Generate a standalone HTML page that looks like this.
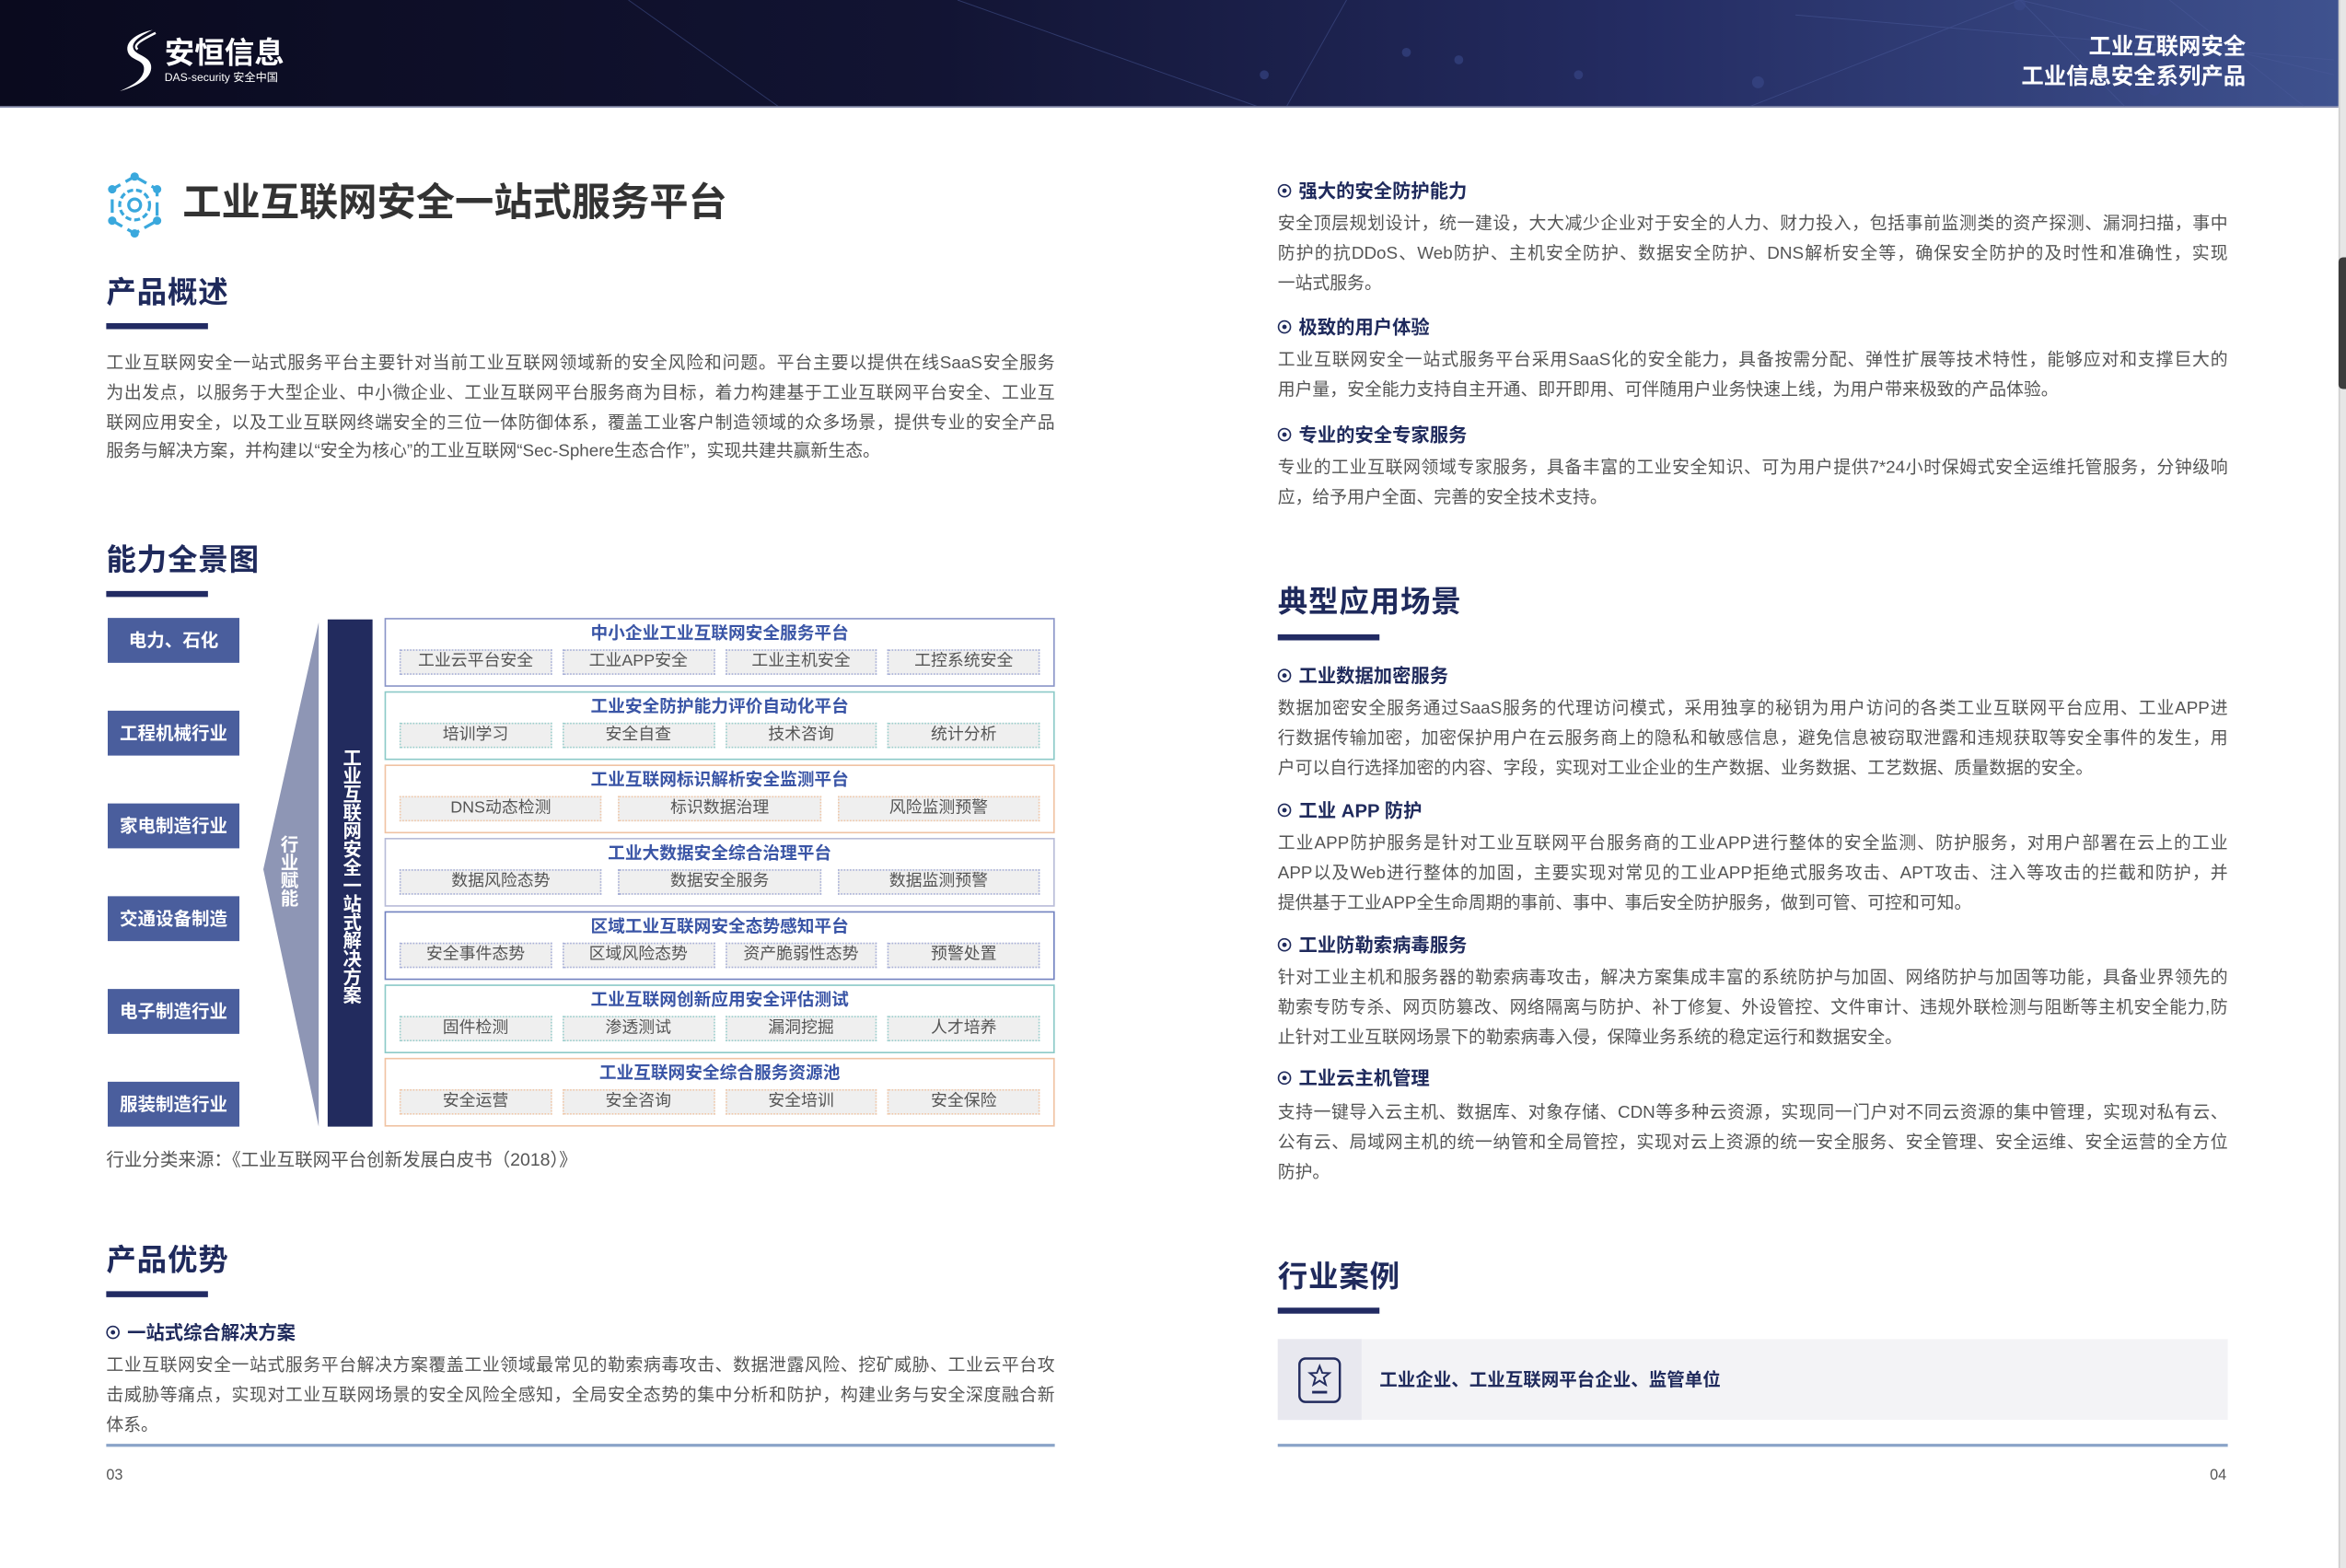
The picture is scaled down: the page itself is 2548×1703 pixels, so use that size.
<!DOCTYPE html>
<html><head><meta charset="utf-8">
<style>
html,body{margin:0;padding:0;width:2548px;height:1702px;overflow:hidden;background:#fff}
#w{position:absolute;left:0;top:0;width:1568px;height:1047.5px;transform:scale(1.625);transform-origin:0 0;font-family:"Liberation Sans","Noto Sans CJK SC",sans-serif;}
.a{position:absolute}
.hdr{left:0;top:0;width:1563px;height:71px;background:linear-gradient(90deg,#0a0a1e 0%,#121433 40%,#242c62 70%,#3f528f 100%);overflow:hidden;border-bottom:1px solid #8a90b0}
.h2{font-size:20px;font-weight:bold;color:#1f2a5c;letter-spacing:0.5px}
.bar{height:4px;background:#222b63}
.p{font-size:11.6px;line-height:19.8px;color:#555;text-align:justify;text-align-last:justify}
.p div{height:19.8px;overflow:visible}
.p div:last-child{text-align-last:left}
.sub{font-size:12.5px;font-weight:bold;color:#1f2a5c;line-height:16px;white-space:nowrap}
.sub i{display:inline-block;width:7px;height:7px;border:1.3px solid #1f2a5c;border-radius:50%;position:relative;margin-right:5px;vertical-align:0px}
.sub i:after{content:"";position:absolute;left:2px;top:2px;width:3px;height:3px;background:#1f2a5c;border-radius:50%}
.ind{left:72px;width:88px;height:30px;background:#4a5e9d;color:#fff;font-weight:bold;font-size:12px;line-height:30px;text-align:center}
.box{left:257px;width:446px;height:44px;border:1px solid #8a95c8;background:#fff}
.box .t{text-align:center;font-size:11.5px;font-weight:bold;color:#3a55a6;line-height:14px;margin-top:3px}
.chips{display:flex;gap:7px;padding:3px 9px 0 9px}
.chips span{flex:1;height:15px;line-height:15px;background:#efefef;border:1px dotted #a8b0d8;font-size:11px;color:#555;text-align:center}
.teal{border-color:#8ccac8}.teal .chips span{border-color:#9ccfcd}
.org{border-color:#f0c3a3}.org .chips span{border-color:#f0c8aa}
.lav{border-color:#b8bcd8}
.vt{writing-mode:vertical-rl;font-weight:bold;color:#fff}
.line{height:2px;background:#8aa3c8}
</style></head><body><div id="w">

<div class="a hdr">
<svg class="a" style="left:0;top:0" width="1563" height="71">
<g stroke="#4a5a9a" stroke-width="0.6" opacity="0.5" fill="none">
<line x1="420" y1="0" x2="520" y2="71"/><line x1="640" y1="0" x2="840" y2="71"/>
<line x1="900" y1="0" x2="860" y2="71"/><line x1="1350" y1="0" x2="1170" y2="71"/>
<line x1="1350" y1="0" x2="1560" y2="50"/><line x1="1350" y1="0" x2="1420" y2="71"/>
<line x1="1200" y1="10" x2="1560" y2="40"/><line x1="1450" y1="0" x2="1540" y2="71"/>
</g>
<g fill="#3a4a8a" opacity="0.6">
<circle cx="1350" cy="3" r="4"/><circle cx="1175" cy="55" r="4"/><circle cx="1055" cy="50" r="3"/>
<circle cx="975" cy="40" r="3"/><circle cx="845" cy="50" r="3"/><circle cx="940" cy="35" r="3"/><circle cx="1440" cy="60" r="4"/>
</g>
</svg>
<svg class="a" style="left:78px;top:18px" width="30" height="44" viewBox="0 0 30 44">
<path d="M24 2 C14 4 4 10 8 18 C11 23 20 22 18 30 C16 37 8 40 2 43 C12 40 24 35 23 26 C22 19 12 19 11 14 C10 9 18 5 24 2Z" fill="#fff"/>
<path d="M26 4 C18 8 10 12 14 15" stroke="#fff" stroke-width="1.5" fill="none"/>
</svg>
<div class="a" style="left:110px;top:25px;color:#fff;font-size:20px;font-weight:bold;line-height:22px">安恒信息</div>
<div class="a" style="left:110px;top:47px;color:#fff;font-size:7.5px;line-height:9px;white-space:nowrap">DAS-security 安全中国</div>
<div class="a" style="right:62px;top:22px;color:#fff;font-size:15px;font-weight:bold;line-height:20px;text-align:right;white-space:nowrap">工业互联网安全<br>工业信息安全系列产品</div>
</div>
<div class="a" style="left:1563px;top:0;width:5px;height:1048px;background:#e6e6e6;border-left:1px solid #cfcfcf"></div>
<div class="a" style="left:1563px;top:172px;width:5px;height:88px;background:#3c3c3c;border-radius:3px 0 0 3px"></div>

<!-- LEFT -->
<svg class="a" style="left:69px;top:114px" width="42" height="46" viewBox="0 0 42 46">
<g stroke="#3aa8dd" stroke-width="2" fill="none">
<path d="M21 4 L36 12.5 L36 33.5 L21 42 L6 33.5 L6 12.5Z" stroke-dasharray="9 4"/>
<circle cx="21" cy="23" r="10" stroke-dasharray="4 2"/>
<circle cx="21" cy="23" r="4"/>
</g>
<g fill="#3aa8dd"><circle cx="21" cy="4" r="2.8"/><circle cx="36" cy="12.5" r="2.8"/><circle cx="36" cy="33.5" r="2.8"/><circle cx="21" cy="42" r="2.8"/><circle cx="6" cy="33.5" r="2.8"/><circle cx="6" cy="12.5" r="2.8"/></g>
</svg>
<div class="a" style="left:122px;top:119px;font-size:26px;font-weight:bold;color:#333;line-height:32px;white-space:nowrap">工业互联网安全一站式服务平台</div>

<div class="a h2" style="left:71px;top:183px;line-height:26px">产品概述</div>
<div class="a bar" style="left:71px;top:216px;width:68px"></div>
<div class="a p" style="left:71px;top:233px;width:634px">
<div>工业互联网安全一站式服务平台主要针对当前工业互联网领域新的安全风险和问题。平台主要以提供在线SaaS安全服务</div>
<div>为出发点，以服务于大型企业、中小微企业、工业互联网平台服务商为目标，着力构建基于工业互联网平台安全、工业互</div>
<div>联网应用安全，以及工业互联网终端安全的三位一体防御体系，覆盖工业客户制造领域的众多场景，提供专业的安全产品</div>
<div>服务与解决方案，并构建以“安全为核心”的工业互联网“Sec-Sphere生态合作”，实现共建共赢新生态。</div>
</div>

<div class="a h2" style="left:71px;top:362px;line-height:26px">能力全景图</div>
<div class="a bar" style="left:71px;top:395px;width:68px"></div>

<div class="a ind" style="top:413px">电力、石化</div>
<div class="a ind" style="top:475px">工程机械行业</div>
<div class="a ind" style="top:537px">家电制造行业</div>
<div class="a ind" style="top:599px">交通设备制造</div>
<div class="a ind" style="top:661px">电子制造行业</div>
<div class="a ind" style="top:723px">服装制造行业</div>
<svg class="a" style="left:170px;top:413px" width="46" height="342"><polygon points="43,3 43,340 6,168" fill="#8e96b5"/></svg>
<div class="a vt" style="left:185px;top:558px;font-size:12px;line-height:16px">行业赋能</div>
<div class="a" style="left:219px;top:414px;width:30px;height:339px;background:#222b5e"></div>
<div class="a vt" style="left:225px;top:500px;font-size:12.5px;line-height:18px;letter-spacing:-0.3px">工业互联网安全一站式解决方案</div>

<div class="a box" style="top:413px"><div class="t">中小企业工业互联网安全服务平台</div><div class="chips"><span>工业云平台安全</span><span>工业APP安全</span><span>工业主机安全</span><span>工控系统安全</span></div></div>
<div class="a box teal" style="top:462px"><div class="t">工业安全防护能力评价自动化平台</div><div class="chips"><span>培训学习</span><span>安全自查</span><span>技术咨询</span><span>统计分析</span></div></div>
<div class="a box org" style="top:511px"><div class="t">工业互联网标识解析安全监测平台</div><div class="chips" style="gap:11px"><span>DNS动态检测</span><span>标识数据治理</span><span>风险监测预警</span></div></div>
<div class="a box lav" style="top:560px"><div class="t">工业大数据安全综合治理平台</div><div class="chips" style="gap:11px"><span>数据风险态势</span><span>数据安全服务</span><span>数据监测预警</span></div></div>
<div class="a box" style="top:609px;border-color:#7282c0"><div class="t">区域工业互联网安全态势感知平台</div><div class="chips"><span>安全事件态势</span><span>区域风险态势</span><span>资产脆弱性态势</span><span>预警处置</span></div></div>
<div class="a box teal" style="top:658px"><div class="t">工业互联网创新应用安全评估测试</div><div class="chips"><span>固件检测</span><span>渗透测试</span><span>漏洞挖掘</span><span>人才培养</span></div></div>
<div class="a box org" style="top:707px"><div class="t">工业互联网安全综合服务资源池</div><div class="chips"><span>安全运营</span><span>安全咨询</span><span>安全培训</span><span>安全保险</span></div></div>

<div class="a" style="left:71px;top:767px;font-size:12px;color:#555;line-height:16px;white-space:nowrap">行业分类来源：《工业互联网平台创新发展白皮书（2018）》</div>

<div class="a h2" style="left:71px;top:830px;line-height:26px">产品优势</div>
<div class="a bar" style="left:71px;top:863px;width:68px"></div>
<div class="a sub" style="left:71px;top:883px"><i></i>一站式综合解决方案</div>
<div class="a p" style="left:71px;top:903px;width:634px">
<div>工业互联网安全一站式服务平台解决方案覆盖工业领域最常见的勒索病毒攻击、数据泄露风险、挖矿威胁、工业云平台攻</div>
<div>击威胁等痛点，实现对工业互联网场景的安全风险全感知，全局安全态势的集中分析和防护，构建业务与安全深度融合新</div>
<div>体系。</div>
</div>
<div class="a line" style="left:71px;top:965px;width:634px"></div>
<div class="a" style="left:71px;top:981px;font-size:10px;color:#555;line-height:12px">03</div>

<!-- RIGHT -->
<div class="a sub" style="left:854px;top:120px"><i></i>强大的安全防护能力</div>
<div class="a p" style="left:854px;top:140px;width:635px">
<div>安全顶层规划设计，统一建设，大大减少企业对于安全的人力、财力投入，包括事前监测类的资产探测、漏洞扫描，事中</div>
<div>防护的抗DDoS、Web防护、主机安全防护、数据安全防护、DNS解析安全等，确保安全防护的及时性和准确性，实现</div>
<div>一站式服务。</div>
</div>
<div class="a sub" style="left:854px;top:211px"><i></i>极致的用户体验</div>
<div class="a p" style="left:854px;top:231px;width:635px">
<div>工业互联网安全一站式服务平台采用SaaS化的安全能力，具备按需分配、弹性扩展等技术特性，能够应对和支撑巨大的</div>
<div>用户量，安全能力支持自主开通、即开即用、可伴随用户业务快速上线，为用户带来极致的产品体验。</div>
</div>
<div class="a sub" style="left:854px;top:283px"><i></i>专业的安全专家服务</div>
<div class="a p" style="left:854px;top:303px;width:635px">
<div>专业的工业互联网领域专家服务，具备丰富的工业安全知识、可为用户提供7*24小时保姆式安全运维托管服务，分钟级响</div>
<div>应，给予用户全面、完善的安全技术支持。</div>
</div>

<div class="a h2" style="left:854px;top:390px;line-height:26px">典型应用场景</div>
<div class="a bar" style="left:854px;top:424px;width:68px"></div>
<div class="a sub" style="left:854px;top:444px"><i></i>工业数据加密服务</div>
<div class="a p" style="left:854px;top:464px;width:635px">
<div>数据加密安全服务通过SaaS服务的代理访问模式，采用独享的秘钥为用户访问的各类工业互联网平台应用、工业APP进</div>
<div>行数据传输加密，加密保护用户在云服务商上的隐私和敏感信息，避免信息被窃取泄露和违规获取等安全事件的发生，用</div>
<div>户可以自行选择加密的内容、字段，实现对工业企业的生产数据、业务数据、工艺数据、质量数据的安全。</div>
</div>
<div class="a sub" style="left:854px;top:534px"><i></i>工业 APP 防护</div>
<div class="a p" style="left:854px;top:554px;width:635px">
<div>工业APP防护服务是针对工业互联网平台服务商的工业APP进行整体的安全监测、防护服务，对用户部署在云上的工业</div>
<div>APP以及Web进行整体的加固，主要实现对常见的工业APP拒绝式服务攻击、APT攻击、注入等攻击的拦截和防护，并</div>
<div>提供基于工业APP全生命周期的事前、事中、事后安全防护服务，做到可管、可控和可知。</div>
</div>
<div class="a sub" style="left:854px;top:624px"><i></i>工业防勒索病毒服务</div>
<div class="a p" style="left:854px;top:644px;width:635px">
<div>针对工业主机和服务器的勒索病毒攻击，解决方案集成丰富的系统防护与加固、网络防护与加固等功能，具备业界领先的</div>
<div>勒索专防专杀、网页防篡改、网络隔离与防护、补丁修复、外设管控、文件审计、违规外联检测与阻断等主机安全能力,防</div>
<div>止针对工业互联网场景下的勒索病毒入侵，保障业务系统的稳定运行和数据安全。</div>
</div>
<div class="a sub" style="left:854px;top:713px"><i></i>工业云主机管理</div>
<div class="a p" style="left:854px;top:734px;width:635px">
<div>支持一键导入云主机、数据库、对象存储、CDN等多种云资源，实现同一门户对不同云资源的集中管理，实现对私有云、</div>
<div>公有云、局域网主机的统一纳管和全局管控，实现对云上资源的统一安全服务、安全管理、安全运维、安全运营的全方位</div>
<div>防护。</div>
</div>

<div class="a h2" style="left:854px;top:841px;line-height:26px">行业案例</div>
<div class="a bar" style="left:854px;top:874px;width:68px"></div>
<div class="a" style="left:854px;top:895px;width:635px;height:54px;background:#f3f3f6"></div>
<div class="a" style="left:854px;top:895px;width:56px;height:54px;background:#e8e8ef"></div>
<svg class="a" style="left:866px;top:905px" width="32" height="34" viewBox="0 0 32 34">
<rect x="2.5" y="3" width="27" height="29" rx="4" fill="none" stroke="#222b5e" stroke-width="1.5"/>
<path d="M16 8 L17.8 12.6 L22.5 12.8 L18.8 15.8 L20.1 20.5 L16 17.8 L11.9 20.5 L13.2 15.8 L9.5 12.8 L14.2 12.6Z" fill="none" stroke="#222b5e" stroke-width="1.2"/>
<line x1="11" y1="25.5" x2="21" y2="25.5" stroke="#222b5e" stroke-width="1.8"/>
</svg>
<div class="a" style="left:922px;top:914px;font-size:12px;font-weight:bold;color:#1f2a5c;line-height:16px;white-space:nowrap">工业企业、工业互联网平台企业、监管单位</div>
<div class="a line" style="left:854px;top:965px;width:635px"></div>
<div class="a" style="left:1477px;top:981px;font-size:10px;color:#555;line-height:12px">04</div>

</div></body></html>
